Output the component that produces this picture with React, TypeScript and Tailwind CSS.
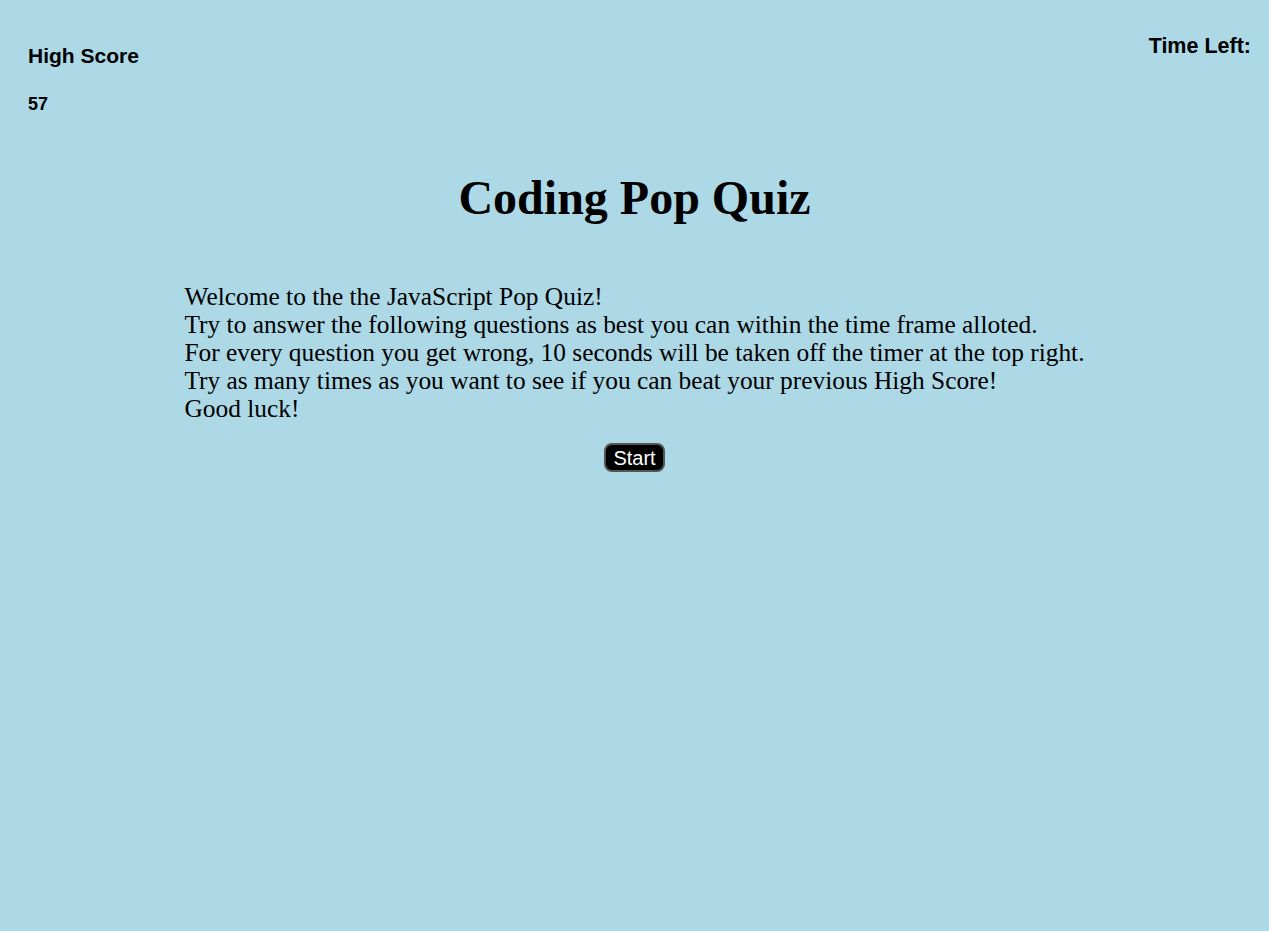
import React from "react";

const serif = { fontFamily: '"Liberation Serif", serif' };

export default function App() {
    return (
        <div className="min-h-screen bg-[#add8e6] text-black" style={serif}>
            <header className="flex justify-between items-start px-[28px] pr-[18px]">
                <div className="pt-[44px] font-['Liberation_Sans',sans-serif]">
                    <h2 className="text-[21px] font-bold leading-[24px]">High Score</h2>
                    <p className="mt-[26px] text-[18px] font-bold leading-[20px]">57</p>
                </div>
                <h2 className="pt-[34px] text-[21.5px] font-bold leading-[24px] font-['Liberation_Sans',sans-serif]">Time Left:</h2>
            </header>

            <main className="flex flex-col items-center">
                <h1 className="mt-[54px] text-[48px] font-bold leading-[60px]">Coding Pop Quiz</h1>
                <div className="mt-[54px] text-[25.4px] leading-[28px]">
                    Welcome to the the JavaScript Pop Quiz!
                    <br />
                    Try to answer the following questions as best you can within the time frame alloted.
                    <br />
                    For every question you get wrong, 10 seconds will be taken off the timer at the top right.
                    <br />
                    Try as many times as you want to see if you can beat your previous High Score!
                    <br />
                    Good luck!
                </div>
                <button
                    type="button"
                    className="mt-[21px] h-[29px] px-[7px] rounded-[8px] bg-black border-2 border-[#555] text-white text-[20px] leading-[22px] font-['Liberation_Sans',sans-serif]"
                >
                    Start
                </button>
            </main>
        </div>
    );
}
